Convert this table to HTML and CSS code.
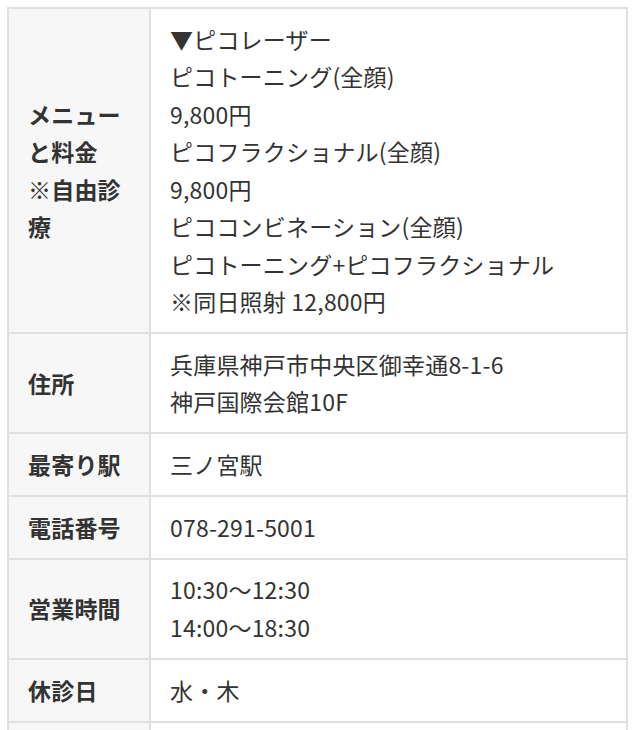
FILE: index.html
```html
<!DOCTYPE html>
<html lang="ja">
<head>
<meta charset="utf-8">
<link rel="stylesheet" href="styles.css">
</head>
<body>
<table class="info">
  <tbody>
    <tr>
      <th>メニューと料金<br>※自由診療</th>
      <td>▼ピコレーザー<br>ピコトーニング(全顔)<br>9,800円<br>ピコフラクショナル(全顔)<br>9,800円<br>ピココンビネーション(全顔)<br>ピコトーニング+ピコフラクショナル<br>※同日照射 12,800円</td>
    </tr>
    <tr>
      <th>住所</th>
      <td>兵庫県神戸市中央区御幸通8-1-6<br>神戸国際会館10F</td>
    </tr>
    <tr>
      <th>最寄り駅</th>
      <td>三ノ宮駅</td>
    </tr>
    <tr>
      <th>電話番号</th>
      <td>078-291-5001</td>
    </tr>
    <tr>
      <th>営業時間</th>
      <td>10:30〜12:30<br>14:00〜18:30</td>
    </tr>
    <tr>
      <th>休診日</th>
      <td>水・木</td>
    </tr>
    <tr>
      <th>&nbsp;</th>
      <td>&nbsp;</td>
    </tr>
  </tbody>
</table>
</body>
</html>
```
FILE: styles.css
```css
html, body {
  margin: 0;
  padding: 0;
  background: #ffffff;
}
body {
  padding: 7px 0 0 7px;
  font-family: "Noto Sans CJK JP", "Noto Sans", sans-serif;
  color: #333333;
}
.info {
  width: 621px;
  border-collapse: separate;
  border-spacing: 0;
  border-top: 2px solid #e0e0e0;
  border-left: 2px solid #e0e0e0;
  font-size: 23px;
  line-height: 37.5px;
  letter-spacing: 0.2px;
}
.info th,
.info td {
  border-right: 2px solid #e0e0e0;
  border-bottom: 2px solid #e0e0e0;
  padding: 11.6px 19px 11.6px 19px;
  vertical-align: middle;
  text-align: left;
}
.info th {
  width: 102px;
  background: #f7f7f7;
  font-weight: 700;
}
.info td {
  background: #ffffff;
  font-weight: 400;
}
```
